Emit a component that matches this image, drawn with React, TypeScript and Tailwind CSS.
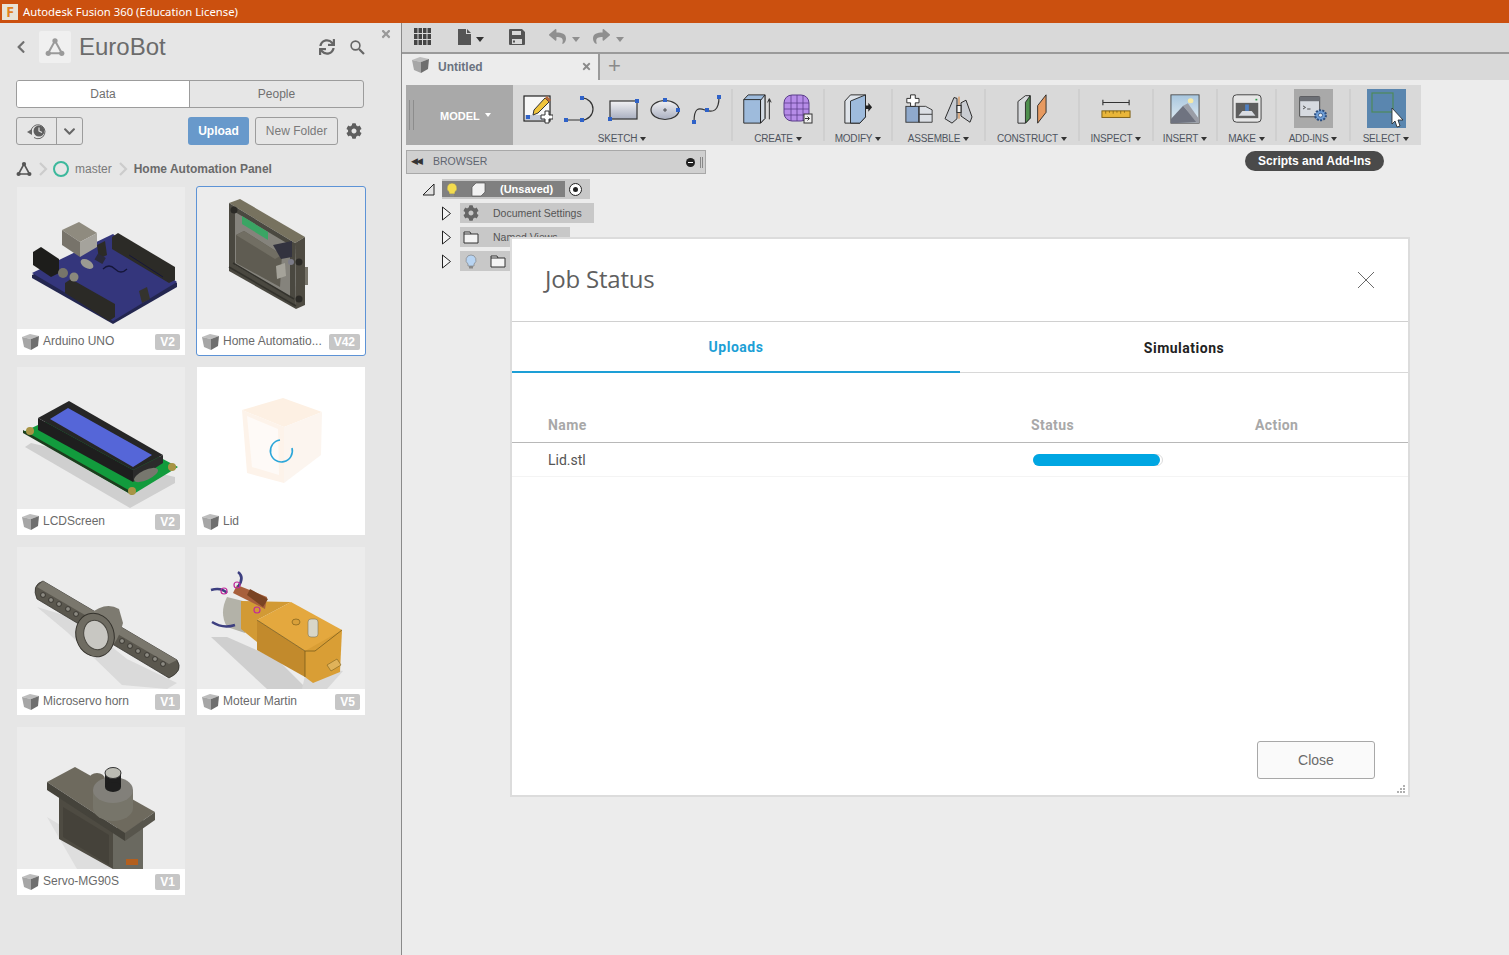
import React from 'react';
import {FaChevronDown, FaChevronLeft, FaCog, FaReply, FaShare, FaSync, FaTimes} from 'react-icons/fa';

const SANS = "font-['Liberation_Sans',Arial,sans-serif]";

const CubeIcon = () => (
    <svg width="17" height="16" viewBox="0 0 17 16" className="shrink-0">
        <polygon points="0,3 8,0 17,2 9,5" fill="#bdbdbd"/>
        <polygon points="0,3 9,5 9,16 2,13" fill="#a6a6a6"/>
        <polygon points="9,5 17,2 16,12 9,16" fill="#6e6e6e"/>
    </svg>
);

const HubLogo = ({color, size}: {color: string; size: number}) => (
    <svg width={size} height={size} viewBox="0 0 16 16">
        <path d="M8 3 L13.5 13 H2.5 Z" fill="none" stroke={color} strokeWidth="1.6"/>
        <circle cx="8" cy="3" r="2.1" fill={color}/>
        <circle cx="2.6" cy="13" r="2.1" fill={color}/>
        <circle cx="13.4" cy="13" r="2.1" fill={color}/>
    </svg>
);

const Arduino = () => (
    <svg viewBox="0 0 168 142" className="w-full h-full">
        <polygon points="15,88 96,50 160,96 160,100 96,137 15,91" fill="#23264f"/>
        <polygon points="15,86 96,47 160,95 96,134" fill="#34367c"/>
        <polygon points="45,43 62,35 80,46 63,55" fill="#8f8b7f"/>
        <polygon points="45,43 63,55 63,70 45,58" fill="#77736a"/>
        <polygon points="63,55 80,46 80,60 63,70" fill="#a5a39c"/>
        <polygon points="95,50 101,46 158,80 158,93 152,96 95,62" fill="#2c2b27"/>
        <polygon points="48,96 54,92 98,117 98,130 92,134 48,106" fill="#2b2a26"/>
        <polygon points="16,65 24,60 42,72 42,86 34,90 16,78" fill="#1d1d1b"/>
        <polygon points="80,58 88,54 90,68 82,72" fill="#2c2b27"/>
        <polygon points="122,104 130,100 133,112 125,116" fill="#34332e"/>
        <circle cx="46" cy="86" r="5" fill="#77756a"/>
        <circle cx="57" cy="90" r="4.5" fill="#8a887c"/>
        <ellipse cx="70" cy="77" rx="7" ry="4" fill="#9b9a92" transform="rotate(30 70 77)"/>
        <rect x="79" y="68" width="9" height="7" fill="#2a2a3a" transform="rotate(30 83 71)"/>
        <path d="M86 82 q6 -6 12 0 q6 6 12 0" fill="none" stroke="#15163a" strokeWidth="1.2"/>
        <path d="M112 68 L146 90" stroke="#15163a" strokeWidth="1"/>
    </svg>
);

const HomePanel = () => (
    <svg viewBox="0 0 168 142" className="w-full h-full">
        <polygon points="32,16 43,12 108,50 98,56" fill="#77725f"/>
        <polygon points="98,56 108,50 108,118 99,122" fill="#4e4b42"/>
        <polygon points="32,16 98,56 99,122 32,84" fill="#4a4840"/>
        <polygon points="38,25 93,58 93,110 38,78" fill="#85837c"/>
        <polygon points="45,29 71,45 71,53 45,37" fill="#3aa564"/>
        <polygon points="39,48 47,44 85,68 83,100 39,76" fill="#5f5c52"/>
        <polygon points="39,48 47,44 85,68 78,72" fill="#716e63"/>
        <polygon points="76,58 95,54 95,70 84,72" fill="#33333f"/>
        <polygon points="79,79 88,76 89,89 80,92" fill="#a5a39a"/>
        <circle cx="94" cy="75" r="3" fill="#7c7c88"/>
        <circle cx="37" cy="23" r="3.5" fill="#2b2a26"/>
        <circle cx="102" cy="75" r="3.5" fill="#2b2a26"/>
        <circle cx="102" cy="112" r="3.5" fill="#2b2a26"/>
        <path d="M32 80 L99 119 M36 76 L97 112" stroke="#33322c" strokeWidth="1.5"/>
        <rect x="108" y="80" width="3" height="18" fill="#77746a"/>
    </svg>
);

const LcdScreen = () => (
    <svg viewBox="0 0 168 142" className="w-full h-full">
        <polygon points="8,80 14,76 158,110 158,116 113,141" fill="#cfcfcf"/>
        <polygon points="6,65 53,43 161,100 115,128" fill="#129b3d"/>
        <polygon points="6,66 115,128 115,125 6,63" fill="#1c3d1d"/>
        <circle cx="13" cy="64" r="4" fill="#a89445"/>
        <circle cx="155" cy="100" r="4" fill="#a89445"/>
        <circle cx="115" cy="124" r="4" fill="#a89445"/>
        <polygon points="21,63 21,51 116,103 116,115" fill="#1e1e1e"/>
        <polygon points="116,103 146,88 146,96 116,115" fill="#2b2b2b"/>
        <polygon points="21,51 52,34 146,88 116,103" fill="#262626"/>
        <polygon points="33,52 51,41 135,88 116,100" fill="#5566d8"/>
        <ellipse cx="129" cy="108" rx="13" ry="5" fill="#77776e" transform="rotate(-25 129 108)"/>
    </svg>
);

const LidPlaceholder = () => (
    <svg viewBox="0 0 168 142" className="w-full h-full">
        <polygon points="45,43 86,31 125,45 87,60" fill="#fdf0e3"/>
        <polygon points="45,43 87,60 87,116 50,106" fill="#fdf3ea"/>
        <polygon points="50,49 81,62 82,108 55,100" fill="#fefaf7"/>
        <polygon points="87,60 125,45 124,88 87,116" fill="#fcf5ef"/>
        <path d="M95 81 A11 11 0 1 1 83 73" fill="none" stroke="#2ba6d9" strokeWidth="1.6"/>
    </svg>
);

const ServoHorn = () => (
    <svg viewBox="0 0 168 142" className="w-full h-full">
        <polygon points="20,60 60,72 110,112 160,136 150,142 105,138 50,85" fill="#dadada"/>
        <path d="M26 34 L160 113 Q167 124 152 131 L20 52 Q14 38 26 34 Z" fill="#5a574e" stroke="#2d2b26" strokeWidth="0.7"/>
        <path d="M26 34 L160 113 L152 117 L20 40 Z" fill="#7a776d"/>
        {[[26, 48], [34, 53], [42, 57], [51, 62], [59, 67], [105, 94], [113, 99], [121, 104], [130, 108], [138, 112], [146, 117]].map(([x, y]) => (
            <circle key={x} cx={x} cy={y} r="2.4" fill="#8c8a82" stroke="#2d2b26" strokeWidth="0.8"/>
        ))}
        <path d="M72 68 Q88 54 102 62 L106 76 Q100 100 84 108 Z" fill="#7d7a70"/>
        <ellipse cx="78" cy="88" rx="19" ry="22" fill="#6f6c62" stroke="#34322c" strokeWidth="1" transform="rotate(-18 78 88)"/>
        <ellipse cx="79" cy="88" rx="12" ry="15" fill="#c8c7c2" stroke="#4a4841" strokeWidth="1" transform="rotate(-18 79 88)"/>
    </svg>
);

const Motor = () => (
    <svg viewBox="0 0 168 142" className="w-full h-full">
        <polygon points="14,90 30,90 80,112 110,142 70,142" fill="#cfcfcf"/>
        <polygon points="110,120 146,124 130,142 105,142" fill="#d8d8d8"/>
        <path d="M30 50 Q22 66 30 80 L48 86 L54 56 Z" fill="#b3b2a8"/>
        <polygon points="44,54 94,55 60,73 60,95 44,82" fill="#d29a35"/>
        <polygon points="60,73 94,55 145,83 116,105 108,104" fill="#e4a83e"/>
        <polygon points="60,73 108,104 108,130 60,103" fill="#c28a2c"/>
        <polygon points="108,104 145,83 143,125 116,136 108,130" fill="#d99e35"/>
        <path d="M60 73 L108 104 L108 130 M108 104 L118 104 L145 83" fill="none" stroke="#6d5418" strokeWidth="0.7"/>
        <polygon points="40,38 70,50 68,62 36,46" fill="#a8603c"/>
        <polygon points="53,42 71,52 66,60 50,48" fill="#7a4423"/>
        <path d="M14 43 Q24 40 30 46 M15 75 Q26 82 38 78 M41 25 Q48 30 41 40" fill="none" stroke="#3d3f80" strokeWidth="2.5"/>
        <circle cx="27" cy="44" r="3" fill="none" stroke="#c02a9c" strokeWidth="1.2"/>
        <circle cx="40" cy="38" r="3" fill="none" stroke="#c02a9c" strokeWidth="1.2"/>
        <circle cx="60" cy="63" r="3" fill="none" stroke="#c02a9c" strokeWidth="1.2"/>
        <rect x="111" y="72" width="10" height="18" rx="3" fill="#d8d6c8" stroke="#7d775d" strokeWidth="0.6"/>
        <ellipse cx="99" cy="75" rx="4" ry="3" fill="#d9a03a" stroke="#6d5418" strokeWidth="0.6"/>
        <polygon points="130,118 140,112 144,118 134,124" fill="#e0b35a" stroke="#6d5418" strokeWidth="0.5"/>
    </svg>
);

const Servo = () => (
    <svg viewBox="0 0 168 142" className="w-full h-full">
        <polygon points="30,90 96,130 110,142 60,142" fill="#dedede"/>
        <polygon points="42,70 96,103 96,142 42,112" fill="#4e4b42"/>
        <polygon points="46,80 92,108 92,138 46,110" fill="#45423a"/>
        <polygon points="96,103 126,86 126,142 96,142" fill="#6a6960"/>
        <polygon points="30,55 58,40 138,85 108,106" fill="#6e6a5e"/>
        <polygon points="30,55 108,106 108,114 30,63" fill="#45433b"/>
        <polygon points="108,106 138,85 138,93 108,114" fill="#57554c"/>
        <ellipse cx="80" cy="52" rx="8" ry="6" fill="#6e6a5e"/>
        <path d="M76 63 v18 a20 13 0 0 0 40 0 v-18 z" fill="#77756a"/>
        <ellipse cx="96" cy="63" rx="20" ry="13" fill="#82807a"/>
        <rect x="88" y="46" width="16" height="14" fill="#1e1e1e"/>
        <ellipse cx="96" cy="60" rx="8" ry="5" fill="#1e1e1e"/>
        <ellipse cx="96" cy="46" rx="8" ry="5.5" fill="#bcbcb4" stroke="#333" strokeWidth="1"/>
        <rect x="109" y="132" width="12" height="6" fill="#b35f1e"/>
    </svg>
);

const Card = ({name, version, selected, blank, children}: {
    name: string;
    version?: string;
    selected?: boolean;
    blank?: boolean;
    children: React.ReactNode;
}) => (
    <div className={`relative w-[168px] h-[168px] flex flex-col rounded-[2px] ${selected ? 'outline outline-1 outline-[#5d93d6]' : ''}`}>
        <div className={`h-[142px] ${blank ? 'bg-white' : 'bg-[#ececec]'}`}>{children}</div>
        <div className="h-[26px] bg-white flex items-center pl-[5px] pr-[5px]">
            <CubeIcon/>
            <span className="ml-[4px] mb-[2px] text-[12px] text-[#6a6a6a] whitespace-nowrap flex-1">{name}</span>
            {version && (
                <span className="h-[16px] px-[5px] rounded-[2px] bg-[#c6c6c6] text-white font-bold text-[12px] leading-[16px] shrink-0">
                    {version}
                </span>
            )}
        </div>
    </div>
);

const Node = ({x, y}: {x: number; y: number}) => <rect x={x - 2} y={y - 2} width="4" height="4" fill="#2f62c8"/>;

const NewSketchIcon = () => (
    <svg width="32" height="32" viewBox="0 0 32 32">
        <rect x="3" y="3" width="26" height="25" fill="#f7f7f7" stroke="#222" strokeWidth="1.2"/>
        <rect x="4" y="22" width="24" height="5" fill="#c5cbd8"/>
        <path d="M13 17 L24 5 L28 9 L17 20 L12 22 Z" fill="#f0c43c" stroke="#333" strokeWidth="1"/>
        <path d="M24 5 L26 3 L30 7 L28 9 Z" fill="#b5673a"/>
        <Node x={7} y={24}/>
        <path d="M24 22 h4 v4 h4 v4 h-4 v4 h-4 v-4 h-4 v-4 h4 z" fill="#fff" stroke="#333" strokeWidth="1" transform="translate(0 -4)"/>
    </svg>
);

const LineIcon = () => (
    <svg width="34" height="32" viewBox="0 0 34 32">
        <path d="M3 27 H19 A11 11 0 0 0 19 5" fill="none" stroke="#333" strokeWidth="1.2"/>
        <Node x={3} y={27}/><Node x={19} y={27}/><Node x={19} y={5}/>
    </svg>
);

const RectIcon = () => (
    <svg width="32" height="32" viewBox="0 0 32 32">
        <defs>
            <linearGradient id="sk" x1="0" y1="0" x2="0" y2="1">
                <stop offset="0" stopColor="#f2f2f4"/>
                <stop offset="1" stopColor="#a9afc0"/>
            </linearGradient>
        </defs>
        <rect x="3" y="8" width="27" height="18" fill="url(#sk)" stroke="#333" strokeWidth="1.2"/>
        <Node x={30} y={8}/><Node x={3} y={26}/>
    </svg>
);

const CircleIcon = () => (
    <svg width="32" height="32" viewBox="0 0 32 32">
        <ellipse cx="16" cy="17" rx="14" ry="9.5" fill="url(#sk)" stroke="#333" strokeWidth="1.2"/>
        <path d="M14 17 h4 M16 15 v4" stroke="#333" strokeWidth="0.8"/>
        <Node x={16} y={7}/><Node x={29} y={17}/>
    </svg>
);

const SplineIcon = () => (
    <svg width="32" height="32" viewBox="0 0 32 32">
        <path d="M3 29 C3 14 8 15 14 17 C22 20 28 18 28 4" fill="none" stroke="#333" strokeWidth="1.2"/>
        <Node x={3} y={29}/><Node x={16} y={17}/><Node x={28} y={4}/>
    </svg>
);

const ExtrudeIcon = () => (
    <svg width="30" height="32" viewBox="0 0 34 34" preserveAspectRatio="none">
        <polygon points="2,7 7,2 26,2 26,27 21,32 2,32" fill="#9ebbdc" stroke="#222" strokeWidth="1"/>
        <polygon points="21,8 26,2 26,27 21,32" fill="#d3dbe4" stroke="#222" strokeWidth="1"/>
        <path d="M2 7 H21 V32" fill="none" stroke="#222" strokeWidth="1"/>
        <path d="M31 28 V7 M29 10 L31 6 L33 10" fill="none" stroke="#222" strokeWidth="1"/>
    </svg>
);

const SphereIcon = () => (
    <svg width="32" height="32" viewBox="0 0 32 32">
        <rect x="2" y="2" width="25" height="26" rx="8" fill="#b68ce8" stroke="#5b3e8a" strokeWidth="1"/>
        <path d="M2 10 H27 M2 16 H27 M2 22 H27 M9 2 V28 M15 2 V28 M21 2 V28" stroke="#5b3e8a" strokeWidth="0.8"/>
        <rect x="22" y="21" width="8" height="9" fill="#eee" stroke="#333" strokeWidth="1"/>
        <path d="M23 25.5 h4 M25.5 23.5 l2 2 l-2 2" fill="none" stroke="#333" strokeWidth="1"/>
    </svg>
);

const ModifyIcon = () => (
    <svg width="30" height="30" viewBox="0 0 32 34" preserveAspectRatio="none">
        <polygon points="2,8 8,1 24,1 24,26 18,33 2,33" fill="#dfe4ea" stroke="#222" strokeWidth="1"/>
        <polygon points="8,8 24,1 24,26 18,33 8,33" fill="#9ebbdc" stroke="#222" strokeWidth="1"/>
        <path d="M24 13 h3 v-3 l4 5 l-4 5 v-3 h-3 z" fill="#222"/>
    </svg>
);

const AssembleIcon = () => (
    <svg width="30" height="30" viewBox="0 0 32 34" preserveAspectRatio="none">
        <rect x="2" y="14" width="14" height="18" fill="#8fa9cc" stroke="#333"/>
        <polygon points="16,14 23,14 30,18 30,32 16,32" fill="#dbdfe5" stroke="#333"/>
        <path d="M16 23 H30 M16 14 V32" stroke="#333"/>
        <path d="M7 1 h5 v4 h4 v5 h-4 v4 h-5 v-4 h-4 v-5 h4 z" fill="#fff" stroke="#222"/>
    </svg>
);

const JointIcon = () => (
    <svg width="30" height="30" viewBox="0 0 30 34" preserveAspectRatio="none">
        <polygon points="1,28 10,4 13,5 13,28 8,33" fill="#c8ccd2" stroke="#222"/>
        <polygon points="17,10 22,7 28,26 26,32 17,25" fill="#c8ccd2" stroke="#222"/>
        <path d="M15 3 V28" stroke="#d67a2b"/>
        <rect x="13" y="13" width="4" height="8" fill="#f4f4f4" stroke="#222"/>
    </svg>
);

const PlaneIcon = () => (
    <svg width="30" height="30" viewBox="0 0 32 36" preserveAspectRatio="none">
        <polygon points="1,9 9,2 14,2 14,29 9,35 1,35" fill="#d8dadd" stroke="#222"/>
        <polygon points="9,10 14,2 14,29 9,35" fill="#4e8f4e" stroke="#222"/>
        <polygon points="22,14 31,1 31,22 22,35" fill="#e79a60" stroke="#222"/>
    </svg>
);

const RulerIcon = () => (
    <svg width="30" height="30" viewBox="0 0 32 32">
        <path d="M2 6 V12 M2 9 H30 M30 6 V12" stroke="#333" strokeWidth="1.2" fill="none"/>
        <rect x="1" y="18" width="30" height="7" fill="#e9b63a" stroke="#7a5d14"/>
        <path d="M5 18 v3 M9 18 v2 M13 18 v3 M17 18 v2 M21 18 v3 M25 18 v2" stroke="#7a5d14" strokeWidth="0.8"/>
    </svg>
);

const InsertIcon = () => (
    <svg width="30" height="30" viewBox="0 0 32 36" preserveAspectRatio="none">
        <defs>
            <linearGradient id="skyfill" x1="0" y1="0" x2="0" y2="1">
                <stop offset="0" stopColor="#a8c6de"/>
                <stop offset="1" stopColor="#e2ecf2"/>
            </linearGradient>
        </defs>
        <rect x="1" y="1" width="30" height="34" fill="url(#skyfill)" stroke="#444"/>
        <circle cx="22" cy="8" r="3" fill="#f6e9a5"/>
        <polygon points="1,30 14,14 30,34 1,35" fill="#6f7380"/>
        <polygon points="14,14 19,11 31,30 31,35 28,34" fill="#9a9da6"/>
    </svg>
);

const MakeIcon = () => (
    <svg width="30" height="29" viewBox="0 0 32 36" preserveAspectRatio="none">
        <rect x="1" y="1" width="30" height="34" rx="4" fill="#e6e6e6" stroke="#333"/>
        <rect x="4" y="11" width="24" height="19" fill="#5e5e5e"/>
        <path d="M7 27 L11 21 H21 L25 27 Z" fill="#d9dce2"/>
        <rect x="14" y="13" width="4" height="8" fill="#4f7fc0"/>
        <rect x="25" y="6" width="2" height="2" fill="#2e9b4a"/>
    </svg>
);

const AddinIcon = () => (
    <svg width="30" height="28" viewBox="0 0 36 36" preserveAspectRatio="none">
        <rect x="2" y="2" width="24" height="26" rx="1" fill="#d6dae0" stroke="#333"/>
        <rect x="2" y="2" width="24" height="6" fill="#6c6f75"/>
        <path d="M6 14 l3 2 l-3 2 M11 18 h4" fill="none" stroke="#333"/>
        <circle cx="27" cy="26" r="6.5" fill="#6f9fd8" stroke="#2d4f80" strokeWidth="2.5" strokeDasharray="2.5 1.5"/>
        <circle cx="27" cy="26" r="2.5" fill="#e8eef5" stroke="#2d4f80"/>
    </svg>
);

const SelectIcon = () => (
    <svg width="39" height="39" viewBox="0 0 39 39" className="bg-[#5a86af]">
        <rect x="5" y="4" width="21" height="19" fill="none" stroke="#4e8a5a" strokeWidth="1.2"/>
        <path d="M25 19 V35 L28 32 L30 38 L33 37 L31 31 L36 31 Z" fill="#fff" stroke="#222" strokeWidth="0.8"/>
    </svg>
);

const RibbonGroup = ({label, width, last, children}: {
    label: string;
    width: number;
    last?: boolean;
    children: React.ReactNode;
}) => (
    <div style={{width}} className="shrink-0 flex items-center h-[60px]">
        <div className="flex-1 min-w-0 flex flex-col items-center h-[60px]">
            <div className="h-[47px] flex items-center justify-center gap-[10px] w-full">{children}</div>
            <div className="mt-[1px] text-[10px] tracking-[-0.2px] leading-[12px] text-[#4f5560] flex items-center gap-[3px] whitespace-nowrap">
                {label}
                <span className="inline-block w-0 h-0 border-l-[3px] border-r-[3px] border-t-[4px] border-l-transparent border-r-transparent border-t-[#333]"/>
            </div>
        </div>
        {!last && <span className="w-[2px] h-[52px] bg-[#cfcfcf] shrink-0"/>}
    </div>
);

const Caret = ({color}: {color: string}) => (
    <span
        style={{borderTopColor: color}}
        className="inline-block w-0 h-0 border-l-[4px] border-r-[4px] border-t-[5px] border-l-transparent border-r-transparent"/>
);

const TreeArrow = () => (
    <svg width="11" height="15" viewBox="0 0 11 15" className="shrink-0">
        <path d="M1.5 1 L9.5 7.5 L1.5 14 Z" fill="#f4f4f4" stroke="#222" strokeWidth="1"/>
    </svg>
);

const FolderIcon = () => (
    <svg width="16" height="13" viewBox="0 0 16 13">
        <path d="M1 1 H7 L8 3 H15 V12 H1 Z" fill="#f4f4f4" stroke="#333" strokeWidth="1"/>
        <path d="M1 3 H8" stroke="#333" strokeWidth="1"/>
    </svg>
);

const Bulb = ({fill}: {fill: string}) => (
    <svg width="12" height="15" viewBox="0 0 12 15">
        <path d="M6 1 a5 5 0 0 1 3 9 v2 h-6 v-2 a5 5 0 0 1 3 -9 z" fill={fill} stroke="#777" strokeWidth="0.6"/>
        <rect x="4" y="12" width="4" height="2.5" fill="#8a8a8a"/>
    </svg>
);

const HistoryIcon = () => (
    <svg width="21" height="17" viewBox="0 0 21 17">
        <path d="M5 9 A7 7 0 1 1 8 14.5" fill="none" stroke="#666" strokeWidth="1"/>
        <path d="M1 9 L6 6 V12 Z" fill="#666"/>
        <circle cx="13" cy="8" r="5.5" fill="#5f5f5f"/>
        <path d="M13 4.5 V8 L16 9.5" fill="none" stroke="#e6e6e6" strokeWidth="1.2"/>
    </svg>
);

const SearchIcon = () => (
    <svg width="15" height="15" viewBox="0 0 15 15">
        <circle cx="5.5" cy="5.5" r="4.4" fill="none" stroke="#666" strokeWidth="1.6"/>
        <path d="M9 9 L14 14" stroke="#666" strokeWidth="2.2"/>
    </svg>
);

const GridIcon = () => (
    <svg width="17" height="17" viewBox="0 0 17 17" fill="#444">
        {[0, 4.5, 9, 13.5].flatMap(x => [0, 6, 12].map(y => (
            <rect key={`${x}-${y}`} x={x} y={y} width="3.5" height="5"/>
        )))}
    </svg>
);

const FileIcon = () => (
    <svg width="13" height="16" viewBox="0 0 13 16">
        <path d="M0 0 H8 V5 H13 V16 H0 Z M9 0 L13 4 H9 Z" fill="#555"/>
    </svg>
);

const SaveIcon = () => (
    <svg width="16" height="16" viewBox="0 0 16 16">
        <path d="M1 0 H13 L16 3 V15 a1 1 0 0 1 -1 1 H1 a1 1 0 0 1 -1 -1 V1 a1 1 0 0 1 1 -1 Z" fill="#555"/>
        <rect x="3" y="2" width="9" height="4" fill="#d9d9d9"/>
        <rect x="3" y="10" width="10" height="5" fill="#d9d9d9"/>
        <rect x="4" y="11.5" width="2" height="2" fill="#555"/>
    </svg>
);

const LeftPanel = () => (
    <aside className="w-[402px] shrink-0 bg-[#e6e6e6] border-r border-[#8a8a8a] relative">
        <button className="absolute left-[380px] top-[5px] text-[#9a9a9a]">
            <FaTimes size={12}/>
        </button>
        <div className="h-[57px] flex items-center pl-[14px] pb-[9px]">
            <FaChevronLeft size={14} className="text-[#707070]"/>
            <div className="ml-[11px] w-[32px] h-[32px] rounded-[2px] bg-[#f0f0f0] flex items-center justify-center">
                <HubLogo color="#9a9a9a" size={20}/>
            </div>
            <span className="ml-[8px] text-[24px] leading-none text-[#6b6b6b]">EuroBot</span>
            <FaSync size={16} className="ml-[153px] text-[#666]"/>
            <span className="ml-[15px]"><SearchIcon/></span>
        </div>
        <div className="ml-[16px] w-[348px] h-[28px] flex border border-[#9c9c9c] rounded-[3px] overflow-hidden text-[12px] text-[#707070]">
            <div className="w-[173px] bg-white border-r border-[#9c9c9c] flex items-center justify-center">Data</div>
            <div className="flex-1 flex items-center justify-center">People</div>
        </div>
        <div className="mt-[9px] ml-[16px] w-[348px] h-[28px] flex items-center">
            <div className="w-[67px] h-[28px] flex border border-[#9c9c9c] rounded-[3px] text-[#666]">
                <div className="w-[40px] border-r border-[#9c9c9c] flex items-center justify-center">
                    <HistoryIcon/>
                </div>
                <div className="flex-1 flex items-center justify-center">
                    <FaChevronDown size={13}/>
                </div>
            </div>
            <button className="ml-[105px] w-[61px] h-[28px] rounded-[3px] bg-[#6899cb] text-white font-bold text-[12px]">Upload</button>
            <button className="ml-[6px] w-[83px] h-[28px] rounded-[3px] border border-[#9c9c9c] text-[#7a7a7a] text-[12px]">New Folder</button>
            <FaCog size={16} className="ml-[8px] text-[#5f5f5f]"/>
        </div>
        <div className="h-[42px] ml-[16px] flex items-center pt-[6px] text-[12px]">
            <HubLogo color="#555" size={16}/>
            <svg width="10" height="14" viewBox="0 0 10 14" className="ml-[6px]">
                <path d="M2 1 L8 7 L2 13" fill="none" stroke="#ccc" strokeWidth="2.2"/>
            </svg>
            <span className="ml-[5px] w-[16px] h-[16px] rounded-full border-2 border-[#3cb89c]"/>
            <span className="ml-[6px] text-[#7a7a7a]">master</span>
            <svg width="10" height="14" viewBox="0 0 10 14" className="ml-[6px]">
                <path d="M2 1 L8 7 L2 13" fill="none" stroke="#ccc" strokeWidth="2.2"/>
            </svg>
            <span className="ml-[6px] text-[#6a6a6a] font-bold">Home Automation Panel</span>
        </div>
        <div className="ml-[17px] grid grid-cols-[168px_168px] gap-x-[12px] gap-y-[12px]">
            <Card name="Arduino UNO" version="V2"><Arduino/></Card>
            <Card name="Home Automatio..." version="V42" selected><HomePanel/></Card>
            <Card name="LCDScreen" version="V2"><LcdScreen/></Card>
            <Card name="Lid" blank><LidPlaceholder/></Card>
            <Card name="Microservo horn" version="V1"><ServoHorn/></Card>
            <Card name="Moteur Martin" version="V5"><Motor/></Card>
            <Card name="Servo-MG90S" version="V1"><Servo/></Card>
        </div>
    </aside>
);

const TopToolbar = () => (
    <div className="h-[31px] bg-[#d9d9d9] border-b-2 border-[#9a9a9a] flex items-center pb-[2px] text-[#555]">
        <span className="ml-[12px]"><GridIcon/></span>
        <span className="ml-[27px]"><FileIcon/></span>
        <span className="ml-[5px]"><Caret color="#333"/></span>
        <span className="ml-[25px]"><SaveIcon/></span>
        <FaReply size={17} className="ml-[24px] text-[#8f8f8f]"/>
        <span className="ml-[6px]"><Caret color="#8f8f8f"/></span>
        <FaShare size={17} className="ml-[13px] text-[#8f8f8f]"/>
        <span className="ml-[6px]"><Caret color="#8f8f8f"/></span>
    </div>
);

const TabStrip = () => (
    <div className="h-[26px] bg-[#d9d9d9] flex">
        <div className="w-[198px] bg-[#ececec] border-r-2 border-[#9a9a9a] flex items-center pl-[10px] pb-[4px] relative">
            <CubeIcon/>
            <span className="ml-[9px] mt-[4px] text-[12px] font-bold text-[#6a7280]">Untitled</span>
            <FaTimes size={11} className="absolute right-[6px] top-[7px] text-[#8a8a8a]"/>
        </div>
        <span className="ml-[8px] text-[22px] leading-[24px] text-[#8a8a8a] font-light">+</span>
    </div>
);

const Ribbon = () => (
    <div className="relative mt-[5px] ml-[4px] w-[1015px] h-[60px] bg-[#d9d9d9] flex">
        <div className="w-[107px] shrink-0 bg-[#a9a9a9] flex items-center text-white text-[11px] font-bold">
            <span className="ml-[3px] w-[5px] h-[30px] border-x border-[#8c8c8c]"/>
            <span className="ml-[26px] mt-[2px]">MODEL</span>
            <span className="ml-[5px] mb-[1px] inline-block w-0 h-0 border-l-[3px] border-r-[3px] border-t-[4px] border-l-transparent border-r-transparent border-t-white"/>
        </div>
        <RibbonGroup label="SKETCH" width={220}>
            <NewSketchIcon/><LineIcon/><RectIcon/><CircleIcon/><SplineIcon/>
        </RibbonGroup>
        <RibbonGroup label="CREATE" width={92}>
            <ExtrudeIcon/><SphereIcon/>
        </RibbonGroup>
        <RibbonGroup label="MODIFY" width={68}><ModifyIcon/></RibbonGroup>
        <RibbonGroup label="ASSEMBLE" width={93}><AssembleIcon/><JointIcon/></RibbonGroup>
        <RibbonGroup label="CONSTRUCT" width={94}><PlaneIcon/></RibbonGroup>
        <RibbonGroup label="INSPECT" width={74}><RulerIcon/></RibbonGroup>
        <RibbonGroup label="INSERT" width={64}><InsertIcon/></RibbonGroup>
        <RibbonGroup label="MAKE" width={59}><MakeIcon/></RibbonGroup>
        <RibbonGroup label="ADD-INS" width={74}>
            <div className="w-[39px] h-[39px] bg-[#a9a9a9] flex items-center justify-center"><AddinIcon/></div>
        </RibbonGroup>
        <RibbonGroup label="SELECT" width={70} last><SelectIcon/></RibbonGroup>
        <div className="absolute left-[839px] top-[66px] w-[139px] h-[20px] rounded-full bg-[#4a4a4a] text-white text-[12px] font-bold flex items-center justify-center">
            Scripts and Add-Ins
        </div>
    </div>
);

const BrowserTree = () => (
    <div className="ml-[4px]">
        <div className="mt-[5px] w-[300px] h-[24px] bg-[#d0d0d0] border border-[#a8a8a8] flex items-center text-[10.5px] text-[#5f6570]">
            <span className="ml-[4px] text-[9px] text-[#333] tracking-[-2px]">◀◀</span>
            <span className="ml-[12px]">BROWSER</span>
            <span className="ml-auto w-[9px] h-[9px] rounded-full bg-[#222] flex items-center justify-center">
                <span className="w-[5px] h-[1px] bg-white"/>
            </span>
            <span className="ml-[5px] mr-[2px] w-[3px] h-[11px] border-x border-[#888]"/>
        </div>
        <div className="mt-[5px] flex flex-col gap-[4px]">
            <div className="h-[20px] flex items-center">
                <svg width="13" height="13" viewBox="0 0 13 13" className="ml-[16px]">
                    <path d="M1 12 L12 1 V12 Z" fill="#e4e4e4" stroke="#222"/>
                </svg>
                <div className="ml-[7px] h-[20px] w-[148px] bg-[#c8c8c8] flex items-center">
                    <div className="h-[16px] w-[123px] bg-[#808080] flex items-center text-white text-[11px] font-bold">
                        <span className="ml-[4px]"><Bulb fill="#f3dc4e"/></span>
                        <svg width="15" height="15" viewBox="0 0 15 15" className="ml-[13px]">
                            <path d="M1 5 L5 1 H14 V10 L10 14 H1 Z" fill="#f2f2f2" stroke="#555" strokeWidth="0.7"/>
                        </svg>
                        <span className="ml-[14px]">(Unsaved)</span>
                    </div>
                    <span className="ml-[4px] w-[13px] h-[13px] rounded-full border border-[#222] bg-white flex items-center justify-center">
                        <span className="w-[5px] h-[5px] rounded-full bg-[#222]"/>
                    </span>
                </div>
            </div>
            <div className="h-[20px] flex items-center ml-[35px]">
                <TreeArrow/>
                <div className="ml-[8px] h-[20px] w-[134px] bg-[#c8c8c8] flex items-center text-[10.5px] text-[#555]">
                    <FaCog size={16} className="ml-[3px] text-[#666]"/>
                    <span className="ml-[14px] mt-[1px]">Document Settings</span>
                </div>
            </div>
            <div className="h-[20px] flex items-center ml-[35px]">
                <TreeArrow/>
                <div className="ml-[8px] h-[20px] w-[110px] bg-[#c8c8c8] flex items-center text-[10.5px] text-[#555]">
                    <span className="ml-[3px]"><FolderIcon/></span>
                    <span className="ml-[14px] mt-[1px]">Named Views</span>
                </div>
            </div>
            <div className="h-[20px] flex items-center ml-[35px]">
                <TreeArrow/>
                <div className="ml-[8px] h-[20px] w-[60px] bg-[#c8c8c8] flex items-center">
                    <span className="ml-[5px]"><Bulb fill="#b8d4f2"/></span>
                    <span className="ml-[13px]"><FolderIcon/></span>
                </div>
            </div>
        </div>
    </div>
);

const JobStatusDialog = () => (
    <div className="absolute left-[510px] top-[237px] w-[900px] h-[560px] bg-white border-2 border-[#dcdcdc] flex flex-col font-['Roboto',sans-serif]">
        <div className="h-[83px] border-b border-[#d0d0d0] flex items-center pl-[33px] pr-[33px] justify-between">
            <span className="text-[24px] text-[#5f5f5f] tracking-[-0.2px] font-['Open_Sans',sans-serif] mt-[-2px]">Job Status</span>
            <svg width="18" height="18" viewBox="0 0 18 18">
                <path d="M1 1 L17 17 M17 1 L1 17" stroke="#6a6a6a" strokeWidth="1"/>
            </svg>
        </div>
        <div className="h-[51px] flex text-[14px] font-bold tracking-[0.5px] border-b border-[#d8d8d8]">
            <div className="w-[448px] flex items-center justify-center pt-[2px] text-[#1d9fd6] border-b-2 border-[#1d9fd6] -mb-px">Uploads</div>
            <div className="flex-1 flex items-center justify-center pt-[2px] text-[#222]">Simulations</div>
        </div>
        <div className="mt-[42px] h-[28px] flex items-start text-[14px] font-bold tracking-[0.4px] text-[#a8a8a8] border-b border-[#b8b8b8] pl-[36px]">
            <span className="w-[483px]">Name</span>
            <span className="w-[224px]">Status</span>
            <span>Action</span>
        </div>
        <div className="h-[34px] flex items-center border-b border-[#f4f4f4] pl-[36px] text-[14px] text-[#555]">
            <span className="w-[485px] mt-[2px]">Lid.stl</span>
            <div className="w-[130px] h-[12px] rounded-full border border-[#dcdcdc]">
                <div className="w-[127px] h-[12px] rounded-full bg-[#00a6e2] -mt-px -ml-px"/>
            </div>
        </div>
        <div className="flex-1 flex justify-end items-end pr-[33px] pb-[16px]">
            <button className="w-[118px] h-[38px] rounded-[3px] border border-[#a8a8a8] bg-[#fafafa] text-[14px] text-[#6a6a6a] font-['Liberation_Sans',sans-serif]">Close</button>
        </div>
        <svg width="10" height="9" viewBox="0 0 10 9" className="absolute right-[2px] bottom-[1px]">
            <path d="M7 0h2v2H7zM4 3h2v2H4zM7 3h2v2H7zM1 6h2v2H1zM4 6h2v2H4zM7 6h2v2H7z" fill="#b0b0b0"/>
        </svg>
    </div>
);

export default function App() {
    return (
        <div className={`relative w-[1509px] h-[955px] overflow-hidden bg-[#ececec] ${SANS}`}>
            <div className="h-[23px] bg-[#cb500f] flex items-center pl-[2px] text-white text-[11.3px] font-['Noto_Sans',sans-serif]">
                <span className="w-[16px] h-[16px] bg-[#e8e2d6] flex items-center justify-center text-[#e2801c] font-bold text-[14px] leading-none">F</span>
                <span className="ml-[5px] mt-[1px]">Autodesk Fusion 360 (Education License)</span>
            </div>
            <div className="flex h-[932px]">
                <LeftPanel/>
                <main className="flex-1 min-w-0">
                    <TopToolbar/>
                    <TabStrip/>
                    <Ribbon/>
                    <BrowserTree/>
                </main>
            </div>
            <JobStatusDialog/>
        </div>
    );
}
